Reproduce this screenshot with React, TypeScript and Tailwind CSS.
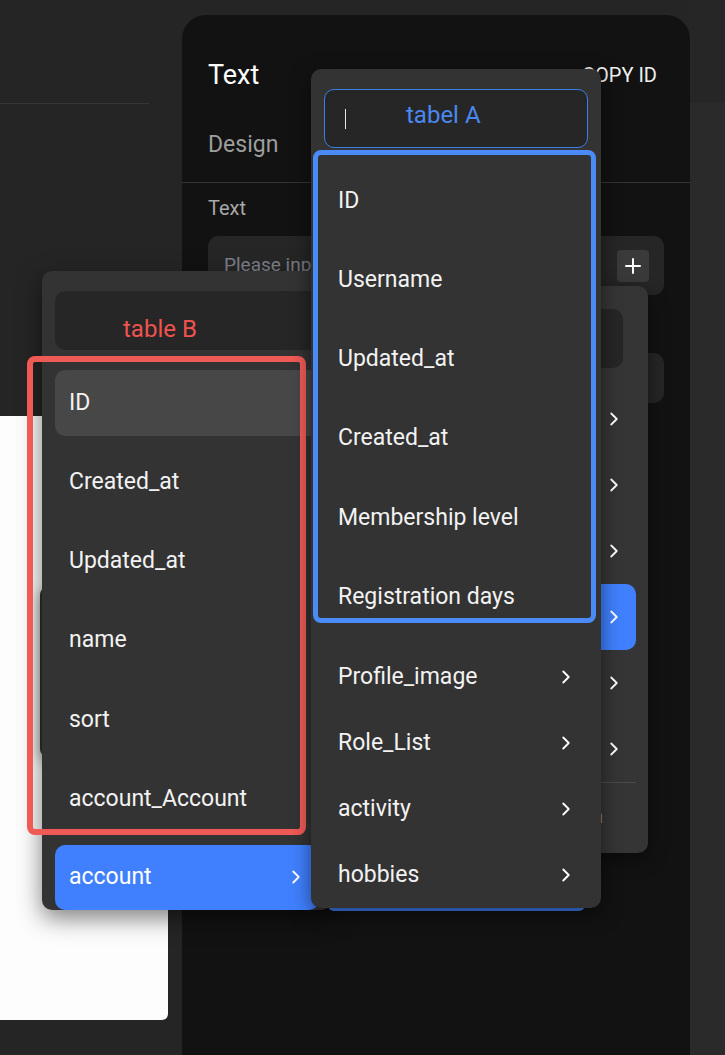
import { ChevronRight, Plus } from "lucide-react";

const A_TOP = ["ID", "Username", "Updated_at", "Created_at", "Membership level", "Registration days"];
const A_REST = ["Profile_image", "Role_List", "activity", "hobbies"];
const B_TOP = ["ID", "Created_at", "Updated_at", "name", "sort", "account_Account"];

function Item({ label, chevron, tone }: { label: string; chevron?: boolean; tone?: "hover" | "active" }) {
  const bg = tone === "active" ? "bg-[#4080ff]" : tone === "hover" ? "bg-[#474747]" : "";
  return (
    <div className={`flex h-[66px] shrink-0 items-center justify-between rounded-[10px] pl-[14px] pr-[11px] ${bg}`}>
      <span className="text-[23px] text-[#f2f2f2]">{label}</span>
      {chevron && <ChevronRight size={22} strokeWidth={2} className="text-white" />}
    </div>
  );
}

export default function App() {
  return (
    <div className="relative h-[1055px] w-[725px] overflow-hidden bg-[#252525] font-['Roboto',sans-serif] text-white">
      {/* base page */}
      <div className="flex h-full">
        <div className="w-[182px] shrink-0">
          <div className="h-[104px] w-[149px] border-b border-[#363636]" />
          <div className="mt-[312px] h-[604px] w-[168px] rounded-br-[6px] bg-[#fdfdfd]" />
        </div>

        <div className="mt-[15px] flex w-[508px] shrink-0 flex-col rounded-t-[24px] bg-[#121212]">
          <div className="flex items-center justify-between pl-[26px] pr-[33px] pt-[44px]">
            <span className="text-[27px] leading-[32px] text-white">Text</span>
            <span className="text-[20px] text-[#f0f0f0]">COPY ID</span>
          </div>
          <div className="mt-[39px] px-[26px] text-[23px] leading-[30px] text-[#9e9e9e]">Design</div>
          <div className="mt-[22px] border-t border-[#333]" />
          <div className="mt-[12px] px-[26px] text-[20px] leading-[26px] text-[#a8a8a8]">Text</div>
          <div className="mx-[26px] mt-[15px] flex h-[59px] items-center justify-between rounded-[10px] bg-[#262626] pl-[16px] pr-[15px]">
            <span className="text-[19px] text-[#7d8089]">Please input</span>
            <div className="flex h-[32px] w-[32px] items-center justify-center rounded-[4px] bg-[#3a3a3a]">
              <Plus size={24} strokeWidth={2} className="text-white" />
            </div>
          </div>
          <div className="mx-[26px] mt-[58px] h-[50px] rounded-[10px] bg-[#262626]" />
        </div>

        <div className="flex flex-1 flex-col">
          <div className="h-[103px] bg-[#262626]" />
          <div className="flex-1 bg-[#2a2a2a]" />
        </div>
      </div>

      {/* first-level menu, mostly covered */}
      <div className="absolute left-[340px] top-[286px] flex h-[567px] w-[308px] flex-col rounded-[10px] bg-[#353535] px-[12px] pt-[23px] shadow-[0_6px_20px_rgba(0,0,0,0.45)]">
        <div className="mr-[13px] h-[59px] rounded-[10px] bg-[#262626]" />
        <div className="mt-[18px] flex flex-col">
          <Item label="" chevron />
          <Item label="" chevron />
          <Item label="" chevron />
          <Item label="" chevron tone="active" />
          <Item label="" chevron />
          <Item label="" chevron />
        </div>
        <div className="border-t border-[#4a4a4a]" />
        <div className="flex h-[66px] items-center justify-end pr-[33px] text-[20px] text-[#9a9a9a]">Join</div>
      </div>

      {/* sliver behind table B */}
      <div className="absolute left-[40px] top-[587px] h-[170px] w-[40px] rounded-[8px] bg-[#2f2f2f] shadow-[0_4px_14px_rgba(0,0,0,0.4)]" />

      {/* table B */}
      <div className="absolute left-[42px] top-[271px] flex h-[639px] w-[290px] flex-col rounded-[10px] bg-[#333333] px-[13px] pt-[20px] shadow-[0_8px_24px_rgba(0,0,0,0.5)]">
        <div className="flex h-[59px] shrink-0 items-center rounded-[10px] bg-[#262626] pl-[68px]">
          <span className="mt-[16px] text-[24px] text-[#ef5350]">table B</span>
        </div>
        <div className="mt-[20px] flex flex-col gap-[13.2px]">
          {B_TOP.map((l, i) => (
            <Item key={l} label={l} tone={i === 0 ? "hover" : undefined} />
          ))}
        </div>
        <div className="mt-[13px]">
          <div className="flex h-[65px] items-center justify-between rounded-[10px] bg-[#4080ff] pl-[14px] pr-[12px]">
            <span className="text-[23px] text-white">account</span>
            <ChevronRight size={22} strokeWidth={2} className="text-white" />
          </div>
        </div>
      </div>
      <div className="absolute left-[27px] top-[356px] h-[479px] w-[279px] rounded-[8px] border-[6px] border-[#f05a55]" />

      {/* table A */}
      <div className="absolute left-[328px] top-[902px] h-[9px] w-[257px] rounded-b-[6px] bg-[#3f7ff7]" />
      <div className="absolute left-[311px] top-[69px] flex h-[839px] w-[290px] flex-col rounded-[10px] bg-[#333333] px-[13px] pt-[20px] shadow-[0_6px_20px_rgba(0,0,0,0.5)]">
        <div className="flex h-[59px] shrink-0 items-center rounded-[10px] border border-[#3b7ee6] bg-[#262626] pl-[20px]">
          <span className="h-[20px] w-px bg-[#e5e5e5]" />
          <span className="mb-[8px] ml-[60px] text-[24px] text-[#4a88f0]">tabel A</span>
        </div>
        <div className="mt-[20px] flex flex-col gap-[13.2px]">
          {A_TOP.map((l) => (
            <Item key={l} label={l} />
          ))}
        </div>
        <div className="mt-[14px] flex flex-col">
          {A_REST.map((l) => (
            <Item key={l} label={l} chevron />
          ))}
        </div>
        <div className="absolute left-[2px] top-[81px] h-[473px] w-[283px] rounded-[8px] border-[5px] border-[#4b8bf8]" />
      </div>
    </div>
  );
}
